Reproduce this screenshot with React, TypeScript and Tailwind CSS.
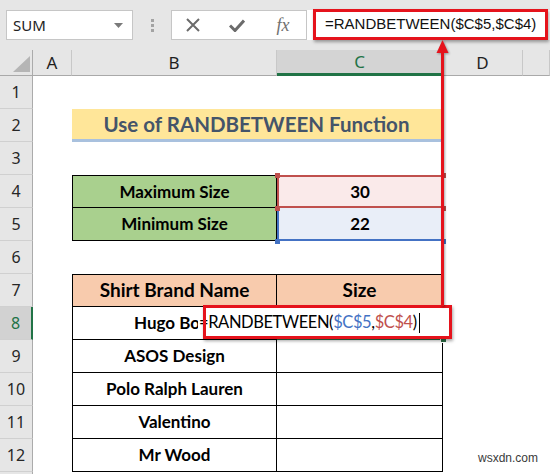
import React from "react";

const CELL = "font-['Lato',sans-serif]";
const UI = "font-['Noto_Sans',sans-serif]";

function RowHead({ n, active = false }: { n: number | string; active?: boolean }) {
  return (
    <div
      className={`flex items-center justify-center text-[16px] border-b border-b-[#d0d0d0] ${UI} ${
        active
          ? "bg-[#d2d2d2] text-[#217346] border-r-2 border-r-[#217346]"
          : "bg-[#e6e6e6] text-[#262626] border-r border-r-[#ababab]"
      }`}
    >
      {n}
    </div>
  );
}

function ColHead({ label, active = false }: { label: string; active?: boolean }) {
  return (
    <div
      className={`flex items-center justify-center text-[17px] border-r border-r-[#c8c8c8] ${UI} ${
        active
          ? "bg-[#d4d4d4] text-[#217346] border-b-[3px] border-b-[#217346]"
          : "bg-[#e6e6e6] text-[#1f1f1f] border-b border-b-[#a9a9a9]"
      }`}
    >
      {label}
    </div>
  );
}

function Blank() {
  return <div className="bg-white" />;
}

function EmptyRow({ n }: { n: number | string }) {
  return (
    <>
      <RowHead n={n} />
      <Blank />
      <Blank />
      <Blank />
      <Blank />
      <Blank />
    </>
  );
}

function BrandRow({ n, name, active = false }: { n: number; name: string; active?: boolean }) {
  return (
    <>
      <RowHead n={n} active={active} />
      <Blank />
      {active ? (
        // the edited C8 text overflows leftwards over this cell; only the left part shows
        <div
          className={`flex items-center justify-start pl-[61px] bg-white border-l border-r border-b border-black font-bold text-[17px] text-black ${CELL}`}
        >
          {name}
        </div>
      ) : (
        <div
          className={`flex items-center justify-center bg-white border-l border-r border-b border-black font-bold text-[17px] text-black ${CELL}`}
        >
          {name}
        </div>
      )}
      <div
        className={`bg-white border-r border-r-black ${
          active ? "border-b-[3px] border-b-[#2d6e47]" : "border-b border-b-black"
        }`}
      />
      <Blank />
      <Blank />
    </>
  );
}

function SheetGrid() {
  return (
    <div className="grid grid-cols-[33px_39px_205px_166px_80px_27px] grid-rows-[26px_repeat(13,33px)]">
      {/* header row */}
      <div className="relative bg-[#e6e6e6] border-r border-r-[#ababab] border-b border-b-[#a9a9a9]">
        <svg className="absolute left-0 top-0" width="33" height="26" viewBox="0 0 33 26">
          <polygon points="30,6 30,22 13,22" fill="#b5b5b5" />
        </svg>
      </div>
      <ColHead label="A" />
      <ColHead label="B" />
      <ColHead label="C" active />
      <ColHead label="D" />
      <ColHead label="" />

      <EmptyRow n={1} />

      {/* row 2: title */}
      <RowHead n={2} />
      <Blank />
      <div
        className={`col-span-2 mr-[2px] flex items-center justify-center bg-[#ffe699] border-b-[3px] border-b-[#a9c1de] font-bold text-[20.5px] text-[#44546a] ${CELL}`}
      >
        Use of RANDBETWEEN Function
      </div>
      <Blank />
      <Blank />

      <EmptyRow n={3} />

      {/* row 4 */}
      <RowHead n={4} />
      <Blank />
      <div
        className={`flex items-center justify-center bg-[#a9d08e] border border-black font-bold text-[17px] text-black ${CELL}`}
      >
        Maximum Size
      </div>
      <div
        className={`flex items-center justify-center bg-[#faeaea] border-2 border-[#c0504d] font-bold text-[17px] text-black ${CELL}`}
      >
        30
      </div>
      <Blank />
      <Blank />

      {/* row 5 */}
      <RowHead n={5} />
      <Blank />
      <div
        className={`flex items-center justify-center bg-[#a9d08e] border-l border-r border-b border-black font-bold text-[17px] text-black ${CELL}`}
      >
        Minimum Size
      </div>
      <div
        className={`flex items-center justify-center bg-[#e9eef8] border-l-2 border-r-2 border-b-2 border-[#4472c4] font-bold text-[17px] text-black ${CELL}`}
      >
        22
      </div>
      <Blank />
      <Blank />

      <EmptyRow n={6} />

      {/* row 7: table header */}
      <RowHead n={7} />
      <Blank />
      <div
        className={`flex items-center justify-center bg-[#f8cbad] border border-black font-bold text-[19px] text-black ${CELL}`}
      >
        Shirt Brand Name
      </div>
      <div
        className={`flex items-center justify-center bg-[#f8cbad] border-t border-r border-b border-black font-bold text-[19px] text-black ${CELL}`}
      >
        Size
      </div>
      <Blank />
      <Blank />

      <BrandRow n={8} name="Hugo Bo" active />
      <BrandRow n={9} name="ASOS Design" />
      <BrandRow n={10} name="Polo Ralph Lauren" />
      <BrandRow n={11} name="Valentino" />
      <BrandRow n={12} name="Mr Wood" />
      <EmptyRow n="" />
    </div>
  );
}

function TopBar() {
  return (
    <div className="h-[50px] bg-[#e6e6e6] flex items-start pt-[10px]">
      {/* name box */}
      <div className="ml-[6px] w-[127px] h-[30px] bg-white border border-[#c6c6c6] flex items-center justify-between pl-[6px] pr-[9px]">
        <span className={`text-[15px] text-[#222] ${UI}`}>SUM</span>
        <svg width="9" height="5" viewBox="0 0 9 5">
          <path d="M0 0H9L4.5 5Z" fill="#7a7a7a" />
        </svg>
      </div>
      {/* grip */}
      <div className="w-[38px] h-[30px] flex flex-col items-center justify-center gap-[2px]">
        <div className="w-[3px] h-[3px] bg-[#a3a3a3]" />
        <div className="w-[3px] h-[3px] bg-[#a3a3a3]" />
        <div className="w-[3px] h-[3px] bg-[#a3a3a3]" />
      </div>
      {/* cancel / enter / function */}
      <div className="w-[136px] h-[30px] bg-white border border-[#c6c6c6] flex items-center">
        <div className="w-[42px] flex justify-center">
          <svg width="14" height="14" viewBox="0 0 14 14">
            <path d="M1 1L13 13M13 1L1 13" stroke="#6b6b6b" strokeWidth="2" />
          </svg>
        </div>
        <div className="w-[46px] flex justify-center">
          <svg width="16" height="13" viewBox="0 0 16 13">
            <path d="M1 6.5L6 11.5L15 1.5" stroke="#6b6b6b" strokeWidth="3" fill="none" />
          </svg>
        </div>
        <div className="w-[46px] flex justify-center">
          <span className="font-['Liberation_Serif',serif] italic text-[18px] text-[#707070] leading-none">
            fx
          </span>
        </div>
      </div>
      {/* formula field */}
      <div className="flex-1 h-[30px] bg-white">
        <div className="ml-[6px] mr-[2px] -mt-[1px] h-[31px] border-[3px] border-[#e5131c] shadow-[1px_2px_3px_rgba(0,0,0,0.35)] flex items-center pl-[9px]">
          <span className="font-['Liberation_Sans',sans-serif] text-[15px] text-[#111]">
            =RANDBETWEEN($C$5,$C$4)
          </span>
        </div>
      </div>
    </div>
  );
}

function Handle({ className }: { className: string }) {
  return <div className={`absolute w-[5px] h-[5px] ${className}`} />;
}

export default function App() {
  return (
    <div className="relative w-[550px] h-[474px] overflow-hidden bg-white">
      <TopBar />
      <SheetGrid />

      {/* range handles around C4 and C5 */}
      <Handle className="left-[275px] top-[173px] bg-[#c0504d]" />
      <Handle className="left-[275px] top-[206px] bg-[#c0504d]" />
      <Handle className="left-[441px] top-[173px] bg-[#c0504d]" />
      <Handle className="left-[441px] top-[206px] bg-[#c0504d]" />
      <Handle className="left-[275px] top-[239px] bg-[#4472c4]" />
      <Handle className="left-[441px] top-[239px] bg-[#4472c4]" />

      {/* in-cell editing text for C8 */}
      <div
        className={`absolute left-[198px] top-[308px] w-[252px] h-[29px] bg-white flex items-center pl-[1px] text-[16.5px] tracking-[-0.4px] text-black ${CELL}`}
      >
        <span>=RANDBETWEEN(</span>
        <span className="text-[#4472c4]">$C$5</span>
        <span>,</span>
        <span className="text-[#c0504d]">$C$4</span>
        <span>)</span>
        <span className="ml-[2px] w-[1px] h-[20px] bg-black" />
      </div>
      {/* fill handle of the active cell */}
      <div className="absolute left-[441px] top-[337px] w-[5px] h-[5px] bg-[#2d6e47] outline outline-1 outline-white" />

      {/* callout box around the edited cell */}
      <div className="absolute left-[203px] top-[305px] w-[249px] h-[34px] border-[3px] border-[#e5131c] shadow-[1px_2px_3px_rgba(0,0,0,0.35)]" />

      {/* arrow from the cell up to the formula bar */}
      <svg
        className="absolute left-[435px] top-[38px] drop-shadow-[1px_1px_1px_rgba(0,0,0,0.35)]"
        width="15"
        height="270"
        viewBox="0 0 15 270"
      >
        <polygon points="1.5,15 7.5,2 13.5,15" fill="#e5131c" />
        <rect x="6" y="13" width="3" height="255" fill="#e5131c" />
      </svg>

      <div className="absolute right-[12px] bottom-[7px] font-['Liberation_Sans',sans-serif] text-[12px] text-[#3a3a3a]">
        wsxdn.com
      </div>
    </div>
  );
}
